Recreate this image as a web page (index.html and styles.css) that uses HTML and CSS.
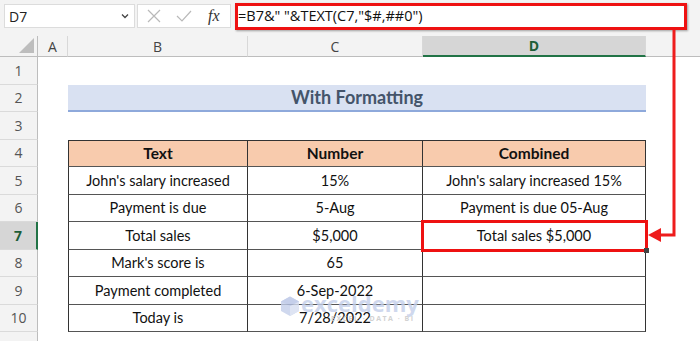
FILE: index.html
```html
<!DOCTYPE html>
<html>
<head>
<meta charset="utf-8">
<link rel="stylesheet" href="styles.css">
</head>
<body>
<div class="app">
  <div class="fbar">
    <div class="namebox">
      <span>D7</span>
      <svg class="chev" width="10" height="8" viewBox="0 0 10 8"><path d="M2 2.5 L5 5.5 L8 2.5" fill="none" stroke="#444" stroke-width="1.3"/></svg>
    </div>
    <div class="btns">
      <svg width="16" height="16" viewBox="0 0 16 16"><path d="M2 2 L14 14 M14 2 L2 14" stroke="#b9b9b9" stroke-width="1.2" fill="none"/></svg>
      <svg width="18" height="16" viewBox="0 0 18 16"><path d="M2 8 L7 13 L16 3" stroke="#b9b9b9" stroke-width="1.2" fill="none"/></svg>
      <span class="fx">fx</span>
    </div>
    <div class="formula">=B7&amp;" "&amp;TEXT(C7,"$#,##0")</div>
  </div>

  <div class="sheet">
    <div class="ch corner"><span class="tri"></span></div>
    <div class="ch">A</div>
    <div class="ch">B</div>
    <div class="ch">C</div>
    <div class="ch chsel">D</div>
    <div class="ch chlast"></div>

    <div class="rh">1</div><div></div><div></div><div></div><div></div><div></div>

    <div class="rh">2</div><div></div>
    <div class="title">With Formatting</div>
    <div></div>

    <div class="rh">3</div><div></div><div></div><div></div><div></div><div></div>

    <div class="rh">4</div><div></div>
    <div class="c th l">Text</div><div class="c th">Number</div><div class="c th">Combined</div><div></div>

    <div class="rh">5</div><div></div>
    <div class="c l">John's salary increased</div><div class="c">15%</div><div class="c">John's salary increased 15%</div><div></div>

    <div class="rh">6</div><div></div>
    <div class="c l">Payment is due</div><div class="c">5-Aug</div><div class="c">Payment is due 05-Aug</div><div></div>

    <div class="rh rhsel">7</div><div></div>
    <div class="c l">Total sales</div><div class="c">$5,000</div><div class="c sel">Total sales $5,000<span class="handle"></span></div><div></div>

    <div class="rh">8</div><div></div>
    <div class="c l">Mark's score is</div><div class="c">65</div><div class="c"></div><div></div>

    <div class="rh">9</div><div></div>
    <div class="c l">Payment completed</div><div class="c">6-Sep-2022</div><div class="c"></div><div></div>

    <div class="rh">10</div><div></div>
    <div class="c l">Today is</div><div class="c">7/28/2022</div><div class="c"></div><div></div>

    <div class="rh"></div><div></div><div></div><div></div><div></div><div></div>
  </div>

  <div class="wm">
    <svg width="22" height="22" viewBox="0 0 22 22"><path d="M2 6.5 L11 1.5 L20 6.5 L20 16 L11 21 L2 16 Z" fill="#c4cfea"/><path d="M11 11 L20 6.5 L20 16 L11 21 Z" fill="#d6def1"/><path d="M2 6.5 L11 1.5 L20 6.5 L11 11 Z" fill="#b7c4e6"/></svg>
    <div class="wmtext"><span class="wm1">exceldemy</span><span class="wm2">EXCEL · DATA · BI</span></div>
  </div>

  <svg class="arrow" width="700" height="341" viewBox="0 0 700 341">
    <polyline points="674,30 674,235 658,235" fill="none" stroke="#ee1c1c" stroke-width="3"/>
    <polygon points="648,235 661,228 661,242" fill="#ee1c1c"/>
  </svg>
</div>
</body>
</html>
```

FILE: styles.css
```css
html, body {
  margin: 0;
  padding: 0;
  background: #ffffff;
}
.app {
  position: relative;
  width: 700px;
  height: 341px;
  overflow: hidden;
  background: #f3f3f3;
  font-family: "Open Sans", "Noto Sans", sans-serif;
}
.fbar {
  display: flex;
  align-items: flex-start;
  height: 36px;
  box-sizing: border-box;
  padding: 3px 0 0 4px;
}
.namebox {
  width: 131px;
  height: 24px;
  margin-top: 1px;
  box-sizing: border-box;
  background: #fff;
  border: 1px solid #dcdcdc;
  display: flex;
  align-items: center;
  justify-content: space-between;
  padding: 0 4px 0 4px;
  font-size: 14px;
  color: #222;
}
.btns {
  margin-left: 2px;
  margin-top: 1px;
  width: 94px;
  height: 24px;
  box-sizing: border-box;
  background: #fff;
  border: 1px solid #dcdcdc;
  display: flex;
  align-items: center;
  gap: 13px;
  padding-left: 8px;
}
.fx {
  font-family: "Liberation Serif", serif;
  font-style: italic;
  font-size: 16px;
  color: #333;
  margin-left: 2px;
}
.formula {
  margin-left: 4px;
  width: 452px;
  height: 27px;
  box-sizing: border-box;
  background: #fff;
  border: 3px solid #ee1111;
  font-size: 14.5px;
  line-height: 20px;
  color: #111;
  white-space: nowrap;
  box-shadow: 1px 1px 2px rgba(0,0,0,0.35);
}
.sheet {
  display: grid;
  grid-template-columns: 38px 30px 180px 175px 223px 1fr;
  grid-template-rows: 21px repeat(11, 27.5px);
  background: #ffffff;
  font-family: "Lato", "Liberation Sans", sans-serif;
  font-size: 14.5px;
  color: #111;
}
.ch {
  background: #f3f3f3;
  border-right: 1px solid #d8d8d8;
  border-bottom: 1px solid #bdbdbd;
  display: flex;
  align-items: center;
  justify-content: center;
  font-family: "Open Sans", "Noto Sans", sans-serif;
  font-size: 14px;
  color: #444;
}
.corner {
  position: relative;
  border-right: 1px solid #bdbdbd;
}
.tri {
  position: absolute;
  right: 3px;
  bottom: 3px;
  width: 0;
  height: 0;
  border-left: 15px solid transparent;
  border-bottom: 15px solid #bdbdbd;
}
.chsel {
  background: #d6d6d6;
  border-bottom: 2px solid #217346;
  color: #1d5e37;
  font-weight: 700;
}
.chlast {
  border-right: none;
}
.rh {
  background: #f3f3f3;
  border-right: 1px solid #bdbdbd;
  border-bottom: 1px solid #dadada;
  display: flex;
  align-items: center;
  justify-content: center;
  font-family: "Open Sans", "Noto Sans", sans-serif;
  font-size: 14px;
  color: #555;
}
.rhsel {
  background: #d6d6d6;
  border-right: 2px solid #217346;
  color: #1d5e37;
  font-weight: 700;
}
.title {
  grid-column: span 3;
  background: #d9e1f2;
  border-bottom: 2px solid #8ea9db;
  display: flex;
  align-items: center;
  justify-content: center;
  font-weight: 700;
  font-size: 18px;
  color: #44546a;
}
.c {
  display: flex;
  align-items: center;
  justify-content: center;
  border-right: 1px solid #333;
  border-bottom: 1px solid #555;
  white-space: nowrap;
}
.l {
  border-left: 1px solid #333;
}
.th {
  background: #f8cbad;
  border-top: 1px solid #333;
  font-weight: 700;
  font-size: 15.5px;
}
.sel {
  position: relative;
  outline: 3px solid #ee1111;
  outline-offset: -1px;
}
.handle {
  position: absolute;
  right: -4px;
  bottom: -4px;
  width: 5px;
  height: 5px;
  background: #444;
}
.wm {
  position: absolute;
  left: 279px;
  top: 292px;
  display: flex;
  align-items: flex-start;
  gap: 0;
  opacity: 0.8;
}
.wm svg {
  margin-top: 3px;
}
.wmtext {
  display: flex;
  flex-direction: column;
  line-height: 1;
}
.wm1 {
  font-family: "Open Sans", sans-serif;
  font-weight: 700;
  font-size: 22px;
  line-height: 22px;
  color: #c4cfea;
}
.wm2 {
  font-family: "Open Sans", sans-serif;
  font-weight: 700;
  font-size: 7px;
  color: #c8c8c8;
  letter-spacing: 1.5px;
  margin-left: 30px;
  margin-top: 1px;
}
.arrow {
  position: absolute;
  left: 0;
  top: 0;
  pointer-events: none;
}
```
